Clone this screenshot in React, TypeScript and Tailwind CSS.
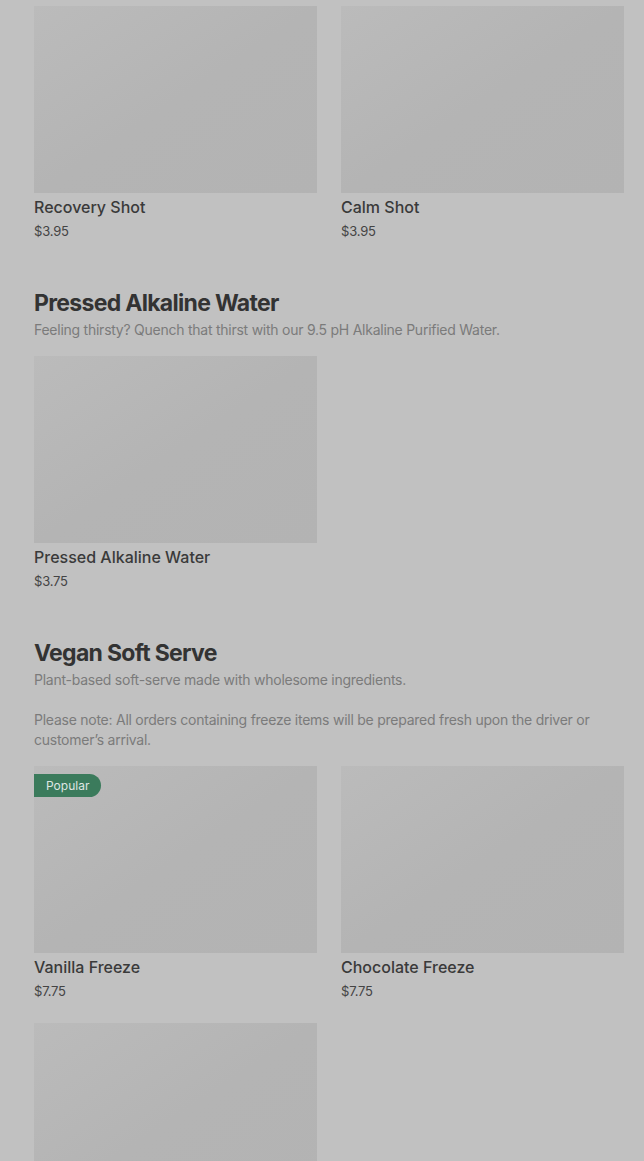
const font = { fontFamily: "Inter, 'Liberation Sans', sans-serif" };

type Item = { name: string; price: string; popular?: boolean };

const Card = ({ item }: { item: Item }) => (
  <div className="flex flex-col">
    <div className="relative h-[187px] w-full bg-gradient-to-br from-[#bbbbbb] via-[#b4b4b4] to-[#b3b3b3]">
      {item.popular && (
        <span className="absolute left-0 top-2 flex h-[23px] items-center rounded-r-full bg-[#3b7b5c] pl-3 pr-3 text-[12px] text-[#dfe6e2]">
          Popular
        </span>
      )}
    </div>
    <div className="mt-[2px] text-[16px] font-medium leading-6 text-[#3a3a3a]">{item.name}</div>
    <div className="mt-[1px] text-[13px] leading-[22px] tracking-[-0.2px] text-[#444444]">{item.price}</div>
  </div>
);

const Grid = ({ items }: { items: Item[] }) => (
  <div className="grid grid-cols-2 gap-x-6 gap-y-[21px]">
    {items.map((it) => (
      <Card key={it.name} item={it} />
    ))}
  </div>
);

const Section = ({
  title,
  desc,
  items,
}: {
  title: string;
  desc: string[];
  items: Item[];
}) => (
  <section className="mt-[45px]">
    <h2 className="text-[23px] font-bold leading-8 tracking-[-0.7px] text-[#333333]">{title}</h2>
    <div className="mt-[1px] flex flex-col gap-5 text-[14px] leading-5 tracking-[-0.25px] text-[#7b7b7b]">
      {desc.map((d) => (
        <p key={d}>{d}</p>
      ))}
    </div>
    <div className="mt-4">
      <Grid items={items} />
    </div>
  </section>
);

export default function App() {
  return (
    <div className="min-h-[1161px] bg-[#c1c1c1] pl-[34px] pr-[20px] pt-[6px]" style={font}>
      <Grid
        items={[
          { name: "Recovery Shot", price: "$3.95" },
          { name: "Calm Shot", price: "$3.95" },
        ]}
      />
      <Section
        title="Pressed Alkaline Water"
        desc={["Feeling thirsty? Quench that thirst with our 9.5 pH Alkaline Purified Water."]}
        items={[{ name: "Pressed Alkaline Water", price: "$3.75" }]}
      />
      <Section
        title="Vegan Soft Serve"
        desc={[
          "Plant-based soft-serve made with wholesome ingredients.",
          "Please note: All orders containing freeze items will be prepared fresh upon the driver or customer’s arrival.",
        ]}
        items={[
          { name: "Vanilla Freeze", price: "$7.75", popular: true },
          { name: "Chocolate Freeze", price: "$7.75" },
          { name: "Vanilla Chocolate Swirl", price: "$7.75" },
        ]}
      />
    </div>
  );
}
